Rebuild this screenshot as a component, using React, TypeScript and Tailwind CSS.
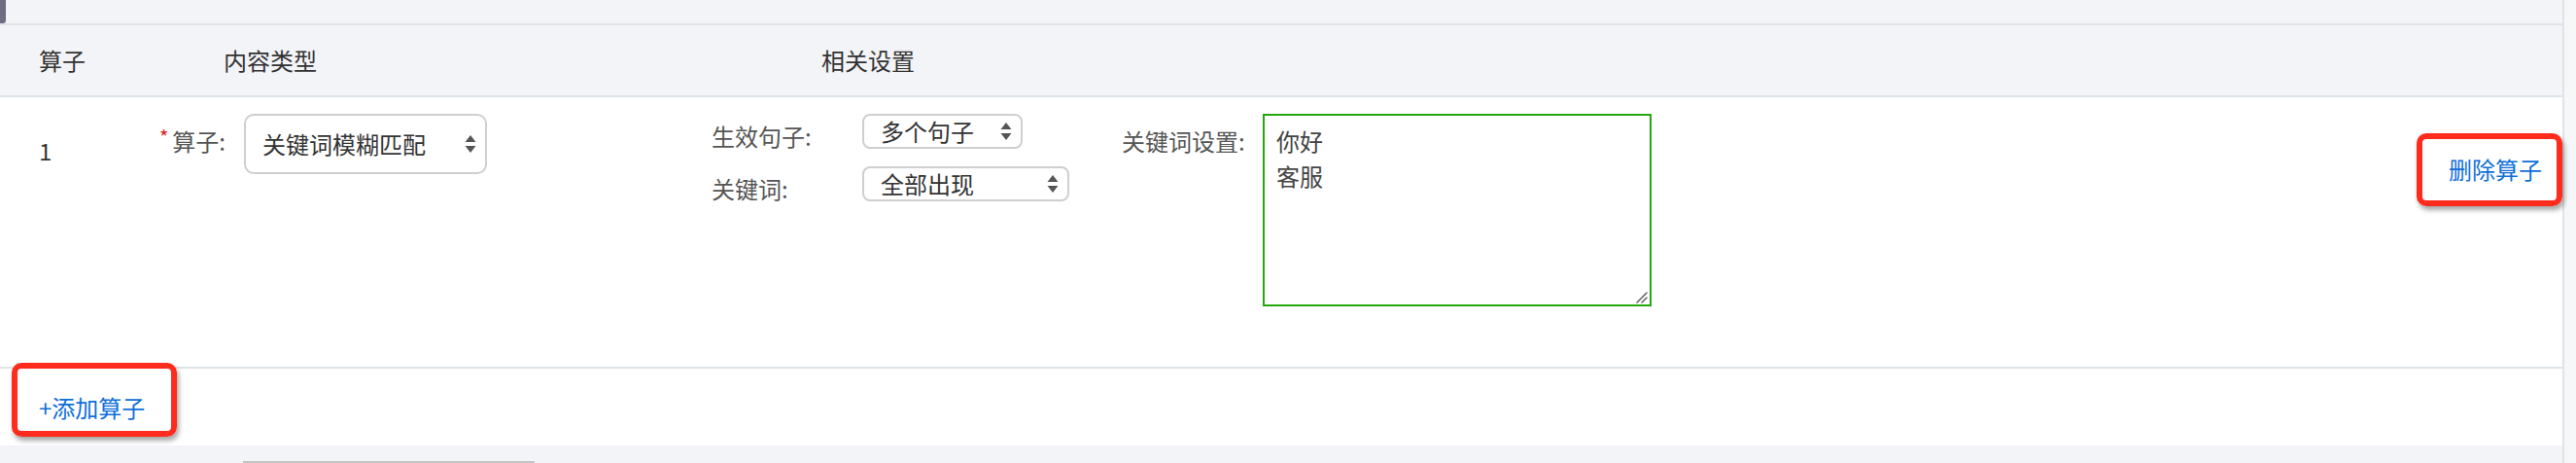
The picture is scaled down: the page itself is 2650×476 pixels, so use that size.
import React from "react";

const FONT = '"Noto Sans CJK SC", "Noto Sans", sans-serif';

function Arrows() {
  return (
    <svg width="12" height="20" viewBox="0 0 12 20" className="shrink-0">
      <path d="M6 1 L11.5 8 L0.5 8 Z" fill="#555" />
      <path d="M6 19 L11.5 12 L0.5 12 Z" fill="#555" />
    </svg>
  );
}

function Select({ text, className }: { text: string; className: string }) {
  return (
    <div
      className={`flex items-center justify-between border-2 border-[#cfcfcf] bg-white pr-[9px] text-[24px] text-[#333] ${className}`}
    >
      <span className="leading-none">{text}</span>
      <Arrows />
    </div>
  );
}

function RedBox({ className }: { className: string }) {
  return (
    <div
      className={`pointer-events-none absolute rounded-[10px] border-[6px] border-[#ff2b1c] shadow-[2px_4px_5px_rgba(0,0,0,0.35)] ${className}`}
    />
  );
}

export default function App() {
  return (
    <div
      className="flex h-[476px] w-[2650px] overflow-hidden bg-[#f6f7f9]"
      style={{ fontFamily: FONT }}
    >
      <div className="flex w-[2638px] flex-col border-r-2 border-[#dfe4e8]">
        {/* top band */}
        <div className="flex h-[26px] shrink-0 border-b-2 border-[#dfe4e8] bg-[#f3f4f8]">
          <div className="h-full w-[6px] rounded-br-[3px] bg-[#6f6d80]" />
        </div>

        {/* header row */}
        <div className="flex h-[74px] shrink-0 items-center border-b-2 border-[#dfe4e8] bg-[#f3f4f8] text-[24px] text-[#333]">
          <div className="w-[230px] pl-[40px]">算子</div>
          <div className="w-[615px]">内容类型</div>
          <div>相关设置</div>
        </div>

        {/* body row */}
        <div className="relative flex h-[279px] shrink-0 items-start border-b-2 border-[#dfe4e8] bg-white pt-[17px] text-[24px]">
          <div className="mt-[21px] w-[164px] pl-[40px] leading-[34px] text-[#333]">1</div>

          <div className="flex w-[568px] items-start">
            <div className="mt-[11px] flex w-[87px] items-start text-[#555] leading-[34px]">
              <span className="mr-[4px] mt-[-4px] text-[20px] text-[#e0201a]">*</span>
              <span>算子:</span>
            </div>
            <Select text="关键词模糊匹配" className="h-[62px] w-[250px] rounded-[10px] pl-[17px]" />
          </div>

          <div className="grid w-[422px] grid-cols-[155px_auto] gap-y-[18px] text-[#555]">
            <div className="flex h-[36px] items-center pt-[10px] leading-none">生效句子:</div>
            <div>
              <Select text="多个句子" className="h-[36px] w-[165px] rounded-[8px] pl-[17px]" />
            </div>
            <div className="flex h-[36px] items-center pt-[10px] leading-none">关键词:</div>
            <div>
              <Select text="全部出现" className="h-[36px] w-[213px] rounded-[8px] pl-[17px]" />
            </div>
          </div>

          <div className="flex items-start">
            <div className="mt-[11px] w-[145px] leading-[34px] text-[#555]">关键词设置:</div>
            <div className="relative">
              <textarea
                readOnly
                defaultValue={"你好\n客服"}
                className="block h-[198px] w-[400px] resize-none border-2 border-[#22a80c] bg-white px-[12px] pt-[8px] text-[24px] leading-[36px] text-[#444] outline-none"
                style={{ fontFamily: FONT }}
              />
              <svg
                width="14"
                height="14"
                viewBox="0 0 14 14"
                className="pointer-events-none absolute bottom-[3px] right-[3px]"
              >
                <path d="M2 13 L12 3" stroke="#666" strokeWidth="1.6" strokeLinecap="round" />
                <path d="M7 13 L12 8" stroke="#666" strokeWidth="1.6" strokeLinecap="round" />
              </svg>
            </div>
          </div>

          <div className="ml-auto mt-[40px] pr-[21px] leading-[34px] text-[#0f6fd8]">删除算子</div>
          <RedBox className="right-0 top-[37px] h-[75px] w-[150px]" />
        </div>

        {/* add row */}
        <div className="relative flex h-[79px] shrink-0 items-center bg-white pl-[40px] text-[24px] text-[#0f6fd8]">
          <span>+添加算子</span>
          <RedBox className="left-[12px] top-[-6px] h-[76px] w-[170px]" />
        </div>

        {/* bottom band */}
        <div className="flex flex-1 items-end bg-[#f3f4f8] pl-[250px]">
          <div className="h-[2px] w-[300px] bg-[#c4c4c4]" />
        </div>
      </div>
      <div className="flex-1 bg-[#f6f7f9]" />
    </div>
  );
}
